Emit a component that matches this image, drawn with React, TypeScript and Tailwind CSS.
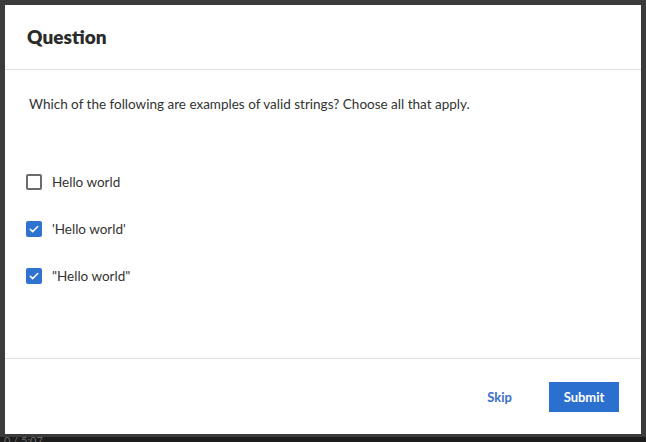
import { useState } from 'react';

const options = [
  { id: 'a', label: 'Hello world', checked: false },
  { id: 'b', label: "'Hello world'", checked: true },
  { id: 'c', label: '"Hello world"', checked: true },
];

function Check({ on }: { on: boolean }) {
  if (!on) {
    return <span className="block size-[16px] shrink-0 rounded-[2px] border-2 border-[#6b6b6b] bg-white" />;
  }
  return (
    <span className="flex size-[16px] shrink-0 items-center justify-center rounded-[2px] bg-[#2f73d0]">
      <svg viewBox="0 0 16 16" className="size-[12px]" fill="none" stroke="white" strokeWidth="2" strokeLinecap="round" strokeLinejoin="round">
        <path d="M3 8.3l3.2 3.2L13 4.7" />
      </svg>
    </span>
  );
}

export default function App() {
  const [picked, setPicked] = useState(options.map(o => o.checked));

  return (
    <div className="flex h-[442px] w-[646px] flex-col overflow-hidden bg-[#3b3b3b] font-['Lato','Liberation_Sans',sans-serif]">
      <div className="ml-[5px] mt-[5px] flex h-[429px] w-[636px] flex-col bg-white">
        <div className="flex h-[65px] items-center border-b border-[#e1e1e1] px-[22px]">
          <h2 className="text-[19px] font-extrabold text-[#2b2b2b]">Question</h2>
        </div>

        <div className="flex-1 px-[24px] pt-[24px]">
          <p className="text-[13.5px] text-[#333]">Which of the following are examples of valid strings? Choose all that apply.</p>
          <div className="-ml-[3px] mt-[59px] flex flex-col gap-[29px]">
            {options.map((o, i) => (
              <label
                key={o.id}
                className="flex cursor-pointer items-center gap-[10px] text-[13.5px] text-[#333]"
                onClick={() => setPicked(p => p.map((v, j) => (j === i ? !v : v)))}
              >
                <Check on={picked[i]} />
                <span className="leading-[18px]">{o.label}</span>
              </label>
            ))}
          </div>
        </div>

        <div className="flex h-[76px] items-center justify-end gap-[37px] border-t border-[#e1e1e1] pr-[22px]">
          <button className="pt-[2px] text-[13px] font-bold text-[#3a6fc8]">Skip</button>
          <button className="h-[30px] w-[70px] bg-[#2b70cf] pt-[2px] text-[13px] font-bold text-white">Submit</button>
        </div>
      </div>
      <div className="mt-[3px] flex-1 overflow-hidden bg-[#1d1d1d] pl-[4px] text-[11px] leading-[8px] text-[#6a6a6a]">
        <span>0 / 5:07</span>
      </div>
    </div>
  );
}
